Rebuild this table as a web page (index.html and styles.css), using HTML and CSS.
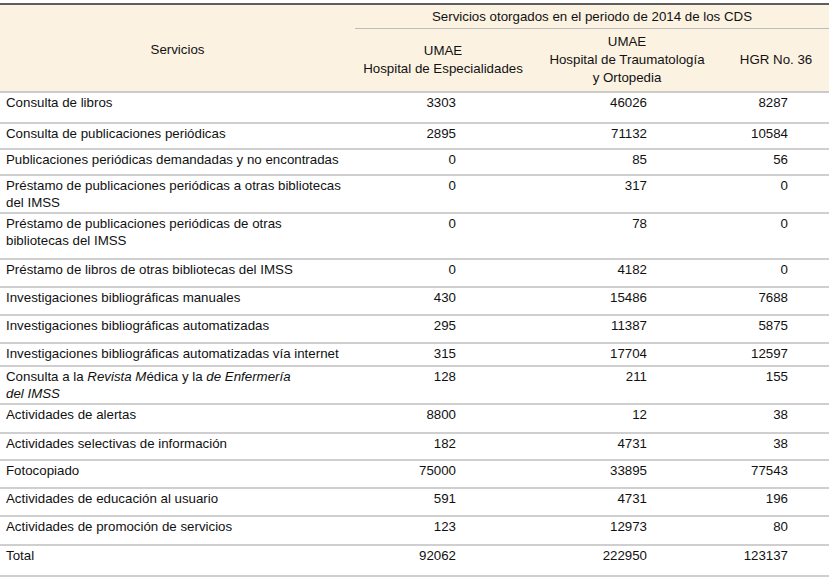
FILE: index.html
```html
<!DOCTYPE html>
<html lang="es">
<head>
<meta charset="utf-8">
<title>Servicios otorgados</title>
<link rel="stylesheet" href="styles.css">
</head>
<body>
<table class="tbl">
  <colgroup>
    <col class="c1"><col class="c2"><col class="c3"><col class="c4">
  </colgroup>
  <thead>
    <tr class="hr1">
      <th rowspan="2" class="h-serv">Servicios</th>
      <th colspan="3" class="h-group">Servicios otorgados en el periodo de 2014 de los CDS</th>
    </tr>
    <tr class="hr2">
      <th class="h-sub">UMAE<br>Hospital de Especialidades</th>
      <th class="h-sub">UMAE<br>Hospital de Traumatología<br>y Ortopedia</th>
      <th class="h-sub">HGR No. 36</th>
    </tr>
  </thead>
  <tbody>
    <tr class="h31"><td class="lbl">Consulta de libros</td><td class="n2">3303</td><td class="n3">46026</td><td class="n4">8287</td></tr>
    <tr class="h26"><td class="lbl">Consulta de publicaciones periódicas</td><td class="n2">2895</td><td class="n3">71132</td><td class="n4">10584</td></tr>
    <tr class="h26"><td class="lbl">Publicaciones periódicas demandadas y no encontradas</td><td class="n2">0</td><td class="n3">85</td><td class="n4">56</td></tr>
    <tr class="h38"><td class="lbl">Préstamo de publicaciones periódicas a otras bibliotecas<br>del IMSS</td><td class="n2">0</td><td class="n3">317</td><td class="n4">0</td></tr>
    <tr class="h46"><td class="lbl">Préstamo de publicaciones periódicas de otras<br>bibliotecas del IMSS</td><td class="n2">0</td><td class="n3">78</td><td class="n4">0</td></tr>
    <tr class="h28"><td class="lbl">Préstamo de libros de otras bibliotecas del IMSS</td><td class="n2">0</td><td class="n3">4182</td><td class="n4">0</td></tr>
    <tr class="h28"><td class="lbl">Investigaciones bibliográficas manuales</td><td class="n2">430</td><td class="n3">15486</td><td class="n4">7688</td></tr>
    <tr class="h28"><td class="lbl">Investigaciones bibliográficas automatizadas</td><td class="n2">295</td><td class="n3">11387</td><td class="n4">5875</td></tr>
    <tr class="h23"><td class="lbl">Investigaciones bibliográficas automatizadas vía internet</td><td class="n2">315</td><td class="n3">17704</td><td class="n4">12597</td></tr>
    <tr class="h38"><td class="lbl">Consulta a la <em>Revista M</em>édica y la <em>de Enfermería<br>del IMSS</em></td><td class="n2">128</td><td class="n3">211</td><td class="n4">155</td></tr>
    <tr class="h29"><td class="lbl">Actividades de alertas</td><td class="n2">8800</td><td class="n3">12</td><td class="n4">38</td></tr>
    <tr class="h27"><td class="lbl">Actividades selectivas de información</td><td class="n2">182</td><td class="n3">4731</td><td class="n4">38</td></tr>
    <tr class="h28"><td class="lbl">Fotocopiado</td><td class="n2">75000</td><td class="n3">33895</td><td class="n4">77543</td></tr>
    <tr class="h28"><td class="lbl">Actividades de educación al usuario</td><td class="n2">591</td><td class="n3">4731</td><td class="n4">196</td></tr>
    <tr class="h29"><td class="lbl">Actividades de promoción de servicios</td><td class="n2">123</td><td class="n3">12973</td><td class="n4">80</td></tr>
    <tr class="h31"><td class="lbl">Total</td><td class="n2">92062</td><td class="n3">222950</td><td class="n4">123137</td></tr>
  </tbody>
</table>
</body>
</html>
```

FILE: styles.css
```css
html, body {
  margin: 0;
  padding: 0;
  background: #ffffff;
}

body {
  font-family: "Liberation Sans", Arial, sans-serif;
  font-size: 13.3px;
  color: #111111;
}

.tbl {
  width: 829px;
  margin-top: 3px;
  table-layout: fixed;
  border-collapse: separate;
  border-spacing: 0;
  border-top: 2px solid #5e5e5e;
}

.c1 { width: 355px; }
.c2 { width: 176px; }
.c3 { width: 192px; }
.c4 { width: 106px; }

thead th {
  background: #fcf2e2;
  font-weight: normal;
  line-height: 18px;
  padding: 0;
  text-align: center;
  vertical-align: middle;
  white-space: nowrap;
}

.hr1 { height: 24px; }
.hr2 { height: 64px; }

.h-serv {
  padding-top: 3px;
  border-bottom: 2px solid #cbcbcb;
}

.h-group {
  border-bottom: 1px solid #bcbcbc;
}

.h-sub {
  border-bottom: 2px solid #cbcbcb;
}

tbody td {
  padding: 1px 0 0 0;
  line-height: 17px;
  vertical-align: top;
  white-space: nowrap;
  border-bottom: 2px solid #cfcfcf;
}

.lbl { padding-left: 6px; text-align: left; }
.n2 { text-align: right; padding-right: 75px; }
.n3 { text-align: right; padding-right: 76px; }
.n4 { text-align: right; padding-right: 41px; }

.h23 { height: 23px; }
.h26 { height: 26px; }
.h27 { height: 27px; }
.h28 { height: 28px; }
.h29 { height: 29px; }
.h31 { height: 31px; }
.h38 { height: 38px; }
.h46 { height: 46px; }
```
